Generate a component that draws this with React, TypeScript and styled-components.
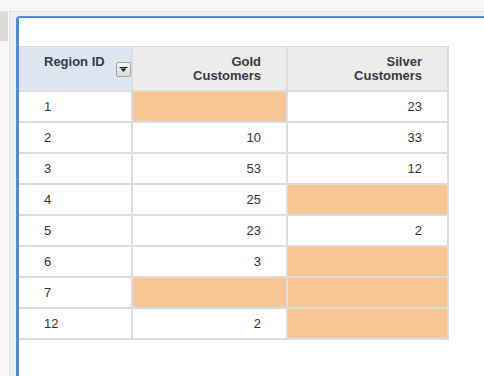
import React from 'react';
import styled, { createGlobalStyle } from 'styled-components';

const Global = createGlobalStyle`
  html, body { margin: 0; padding: 0; height: 100%; overflow: hidden; }
  body { font-family: "Liberation Sans", Arial, sans-serif; background: #fff; }
  #root { height: 100%; }
`;

const Page = styled.div`
  display: flex;
  flex-direction: column;
  height: 100vh;
`;

const TopBar = styled.div`
  height: 11px;
  flex: none;
  background: #f5f5f5;
  border-bottom: 1px solid #e3e3e3;
`;

const Body = styled.div`
  flex: 1;
  display: flex;
  min-height: 0;
`;

const SideStrip = styled.div`
  width: 8px;
  flex: none;
  background: #f7f7f7;
  border-right: 1px solid #ffffff;
`;

const SideTab = styled.div`
  height: 29px;
  background: #d9d9d9;
`;

const Workspace = styled.div`
  flex: 1;
  min-width: 0;
  display: flex;
  background: #eeeeee;
  border-left: 1px solid #dedede;
  padding: 4px 0 0 6px;
`;

const Panel = styled.div`
  flex: 1;
  background: #ffffff;
  border-top: 2px solid #4a8ae2;
  border-left: 3px solid #4a8ae2;
  border-top-left-radius: 4px;
  padding-top: 28px;
`;

const Grid = styled.div`
  display: grid;
  width: max-content;
  grid-template-columns: 112px 153px 159px;
  grid-template-rows: 43px;
  grid-auto-rows: 29px;
  gap: 2px;
  background: #dcdcdc;
  padding: 1px 2px 2px 0;
`;

const HeadCell = styled.div<{ $key?: boolean }>`
  background: ${(p) => (p.$key ? '#dce6f1' : '#ececec')};
  font-weight: bold;
  font-size: 13px;
  line-height: 14px;
  color: #333a44;
  display: flex;
  justify-content: ${(p) => (p.$key ? 'space-between' : 'flex-end')};
  align-items: flex-start;
  text-align: right;
  padding: ${(p) => (p.$key ? '8px 0 0 25px' : '8px 25px 0 25px')};
`;

const FilterButton = styled.button`
  width: 15px;
  height: 15px;
  margin-top: 7px;
  padding: 0;
  border: 1px solid #a3a3a3;
  border-radius: 2px;
  background: linear-gradient(#f5f5f5, #dadada);
  display: flex;
  align-items: center;
  justify-content: center;
`;

const Cell = styled.div<{ $num?: boolean; $empty?: boolean }>`
  background: ${(p) => (p.$empty ? '#f8c692' : '#ffffff')};
  font-size: 13px;
  color: #333333;
  display: flex;
  align-items: center;
  justify-content: ${(p) => (p.$num ? 'flex-end' : 'flex-start')};
  padding: 0 25px;
`;

type Row = { id: string; gold: string | null; silver: string | null };

const rows: Row[] = [
  { id: '1', gold: null, silver: '23' },
  { id: '2', gold: '10', silver: '33' },
  { id: '3', gold: '53', silver: '12' },
  { id: '4', gold: '25', silver: null },
  { id: '5', gold: '23', silver: '2' },
  { id: '6', gold: '3', silver: null },
  { id: '7', gold: null, silver: null },
  { id: '12', gold: '2', silver: null },
];

export default function App() {
  return (
    <>
      <Global />
      <Page>
        <TopBar />
        <Body>
          <SideStrip>
            <SideTab />
          </SideStrip>
          <Workspace>
            <Panel>
              <Grid>
                <HeadCell $key>
                  <span>Region ID</span>
                  <FilterButton aria-label="Filter">
                    <svg width="9" height="6" viewBox="0 0 9 6">
                      <path d="M0.5 0h8v1h-8z" fill="#222" />
                      <path d="M1.5 1.5h6L4.5 5z" fill="#222" />
                    </svg>
                  </FilterButton>
                </HeadCell>
                <HeadCell>
                  Gold
                  <br />
                  Customers
                </HeadCell>
                <HeadCell>
                  Silver
                  <br />
                  Customers
                </HeadCell>
                {rows.map((r) => (
                  <React.Fragment key={r.id}>
                    <Cell>{r.id}</Cell>
                    <Cell $num $empty={r.gold === null}>
                      {r.gold}
                    </Cell>
                    <Cell $num $empty={r.silver === null}>
                      {r.silver}
                    </Cell>
                  </React.Fragment>
                ))}
              </Grid>
            </Panel>
          </Workspace>
        </Body>
      </Page>
    </>
  );
}
